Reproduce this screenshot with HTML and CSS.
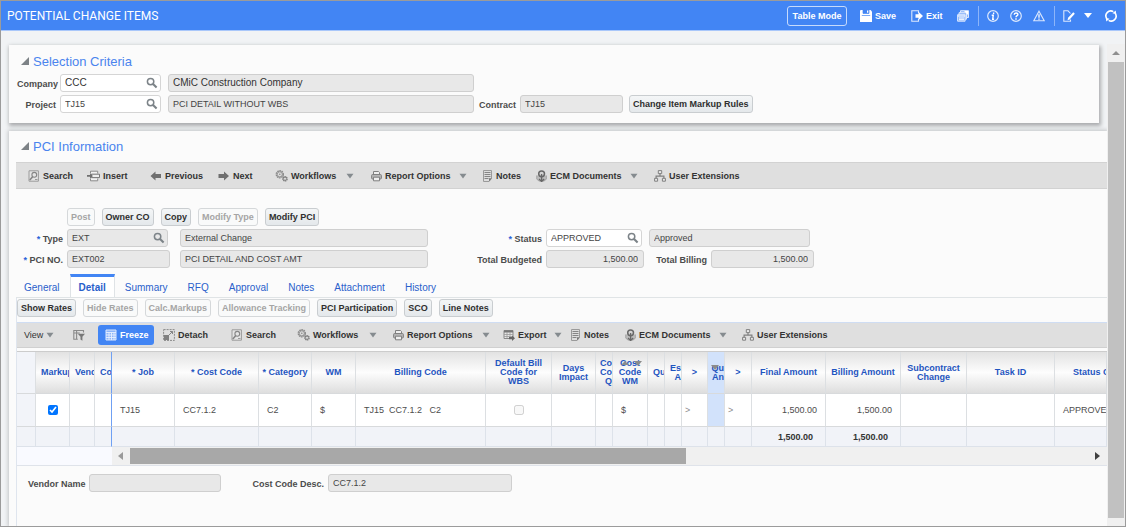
FILE: index.html
```html
<!DOCTYPE html>
<html lang="en">
<head>
<meta charset="utf-8">
<title>Potential Change Items</title>
<link rel="stylesheet" href="styles.css">
</head>
<body>
<svg class="sprite" aria-hidden="true">
  <symbol id="i-lens" viewBox="0 0 12 12"><circle cx="4.6" cy="4.6" r="3.2" fill="none" stroke="#7c8388" stroke-width="1.5"/><path d="M7 7l3.6 3.6" stroke="#7c8388" stroke-width="2.1"/></symbol>
  <symbol id="i-find" viewBox="0 0 12 12"><path d="M1 .8h9.4v10.400H1z" fill="#e4e4e4" stroke="#9a9a9a"/><circle cx="6.300" cy="4.800" r="2.400" fill="none" stroke="#858585" stroke-width="1.100"/><path d="M4.600 6.800L1.800 10" stroke="#858585" stroke-width="1.600"/><path d="M7 9.500h2.500" stroke="#999"/></symbol>
  <symbol id="i-insert" viewBox="0 0 13 12"><path d="M3.500 3.500V1.200h7.200v2.300M3.500 8.500v2.300h7.200V8.500" fill="#f2f2f2" stroke="#8b8b8b"/><path d="M4.500 4.200h8v3.400h-8z" fill="#eee" stroke="#777"/><path d="M0 5h3V3.400L6 5.900 3 8.400V6.800H0z" fill="#707070"/></symbol>
  <symbol id="i-left" viewBox="0 0 12 12"><path d="M.5 6L5.500 1.500V4H11v4H5.500v2.500z" fill="#6f6f6f"/></symbol>
  <symbol id="i-right" viewBox="0 0 12 12"><path d="M11 6L6 1.500V4H.5v4H6v2.500z" fill="#6f6f6f"/></symbol>
  <symbol id="i-gears" viewBox="0 0 13 12"><circle cx="4.800" cy="4.300" r="3.300" fill="none" stroke="#8a8a8a" stroke-width="1.800" stroke-dasharray="1.500 .6"/><circle cx="4.800" cy="4.300" r="2.500" fill="#ddd" stroke="#8a8a8a" stroke-width=".8"/><circle cx="4.800" cy="4.300" r=".8" fill="#888"/><circle cx="10" cy="8.800" r="2" fill="#ddd" stroke="#7c7c7c" stroke-width="1.600" stroke-dasharray="1.200 .4"/><circle cx="10" cy="8.800" r="1.500" fill="#ddd" stroke="#7c7c7c" stroke-width=".7"/></symbol>
  <symbol id="i-print" viewBox="0 0 11 12"><path d="M2.500 4.500V1.500h5l1 1v2" fill="#eee" stroke="#808080"/><rect x=".6" y="4.500" width="9.800" height="4.500" rx="1" fill="#b5b5b5" stroke="#808080"/><path d="M2.500 7.200h6v3.600h-6z" fill="#eee" stroke="#808080"/></symbol>
  <symbol id="i-note" viewBox="0 0 10 12"><path d="M.5.5h8v8l-2.500 3H.5z" fill="#ddd" stroke="#9a9a9a"/><path d="M1.500 2.500h6M1.500 4.500h6M1.500 6.500h6M1.500 8.500h4" stroke="#858585"/><path d="M6 11.500l2.800-3.200H6z" fill="#777"/></symbol>
  <symbol id="i-ecm" viewBox="0 0 11 12"><path d="M.8 5.500v3.500l2 2h5.500l2-2V5.500" fill="#bdbdbd" stroke="#a0a0a0"/><circle cx="5.600" cy="3.800" r="2.900" fill="#d4d4d4" stroke="#686868" stroke-width="1.500"/><path d="M5.600 4v7.500M3 9l2.600 2.500L8.200 9" fill="none" stroke="#686868" stroke-width="1.300"/></symbol>
  <symbol id="i-org" viewBox="0 0 12 12"><path d="M4.300.6h3.400v3H4.300zM.6 8.300h3v2.900h-3zM8.400 8.300h3v2.900h-3z" fill="#e8e8e8" stroke="#808080"/><path d="M6 3.600v2.600M2.100 8.300V6.200h7.800v2.100" fill="none" stroke="#808080" stroke-width="1.200"/></symbol>
  <symbol id="i-qbe" viewBox="0 0 12 12"><path d="M10.500 3.500V1.500H.8v8.700h4M.8 4h6M3.600 1.500v8.700" fill="none" stroke="#8a8a8a" stroke-width="1.100"/><path d="M4.800 4.800h7.200L9.400 7.700v4L7.500 10.500V7.700z" fill="#777"/></symbol>
  <symbol id="i-freeze" viewBox="0 0 12 12"><path d="M1 1h10v10H1z" fill="#8db5f9" stroke="#dbe8fe"/><path d="M1 3.500h10M4 3.500V11M6.500 3.500V11M9 3.500V11M1 6h10M1 8.500h10" stroke="#e9f1ff" stroke-width=".9"/></symbol>
  <symbol id="i-detach" viewBox="0 0 12 12"><path d="M.6.6h10.800v10.800H.6z" fill="none" stroke="#8a8a8a" stroke-dasharray="2 1"/><path d="M1 6h5v5H1z" fill="#808080"/><path d="M6 6l3.500-3.500M7 2.500h2.500V5" fill="none" stroke="#858585"/></symbol>
  <symbol id="i-export" viewBox="0 0 12 12"><path d="M1 1.500h9v8H1z" fill="#e8e8e8" stroke="#888"/><path d="M1 2.500h9" stroke="#777" stroke-width="2"/><path d="M1 5.500h9M1 7.500h9M4 3v6M7 3v6" stroke="#999" stroke-width=".8"/><path d="M6 8h3V6.500l3 2.700L9 12v-1.800H6z" fill="#666"/></symbol>
  <symbol id="i-caret" viewBox="0 0 8 6"><path d="M.5.8h7L4 5.600z" fill="#858b8f"/></symbol>
  <symbol id="i-save" viewBox="0 0 12 12"><path d="M.5 0h10L12 1.500V12H.5A.5.5 0 0 1 0 11.500V.5z" fill="#fff"/><path d="M3 0h6v3.400H3zM1.800 5.500h8.400" fill="#4285f4" stroke="#4285f4" stroke-width=".7"/><path d="M7 .4h1.300v2.400H7z" fill="#fff"/></symbol>
  <symbol id="i-exit" viewBox="0 0 12 12"><path d="M7.500 3V.8H.8v10.400h6.700V9" fill="none" stroke="#dce8fd" stroke-width="1.100"/><path d="M4.500 4.300h3V1.800L12 6 7.500 10.200V7.700h-3z" fill="#fff"/></symbol>
  <symbol id="i-windows" viewBox="0 0 12 12"><path d="M3.500.7h8v6.800h-8z" fill="#8db5f9" stroke="#dce8fd"/><path d="M2 2.700h7.500v6.500H2z" fill="#8db5f9" stroke="#dce8fd"/><path d="M.6 4.700h7.500v6.500H.6z" fill="#8db5f9" stroke="#dce8fd"/><path d="M1 6h7M2 8h5M2 9.700h5" stroke="#fff"/><path d="M7 1h4v4z" fill="#fff"/></symbol>
  <symbol id="i-info" viewBox="0 0 12 12"><circle cx="6" cy="6" r="5.300" fill="none" stroke="#dce8fd" stroke-width="1.200"/><path d="M6.600 2.400v1.500M4.700 5.200h1.600l-.6 4h1.400" fill="none" stroke="#fff" stroke-width="1.400"/></symbol>
  <symbol id="i-help" viewBox="0 0 12 12"><circle cx="6" cy="6" r="5.300" fill="none" stroke="#dce8fd" stroke-width="1.200"/><path d="M4.200 4.700C4.200 2.400 7.900 2.400 7.900 4.500 7.900 5.800 6 5.600 6 7.300M6 8.300v1.400" fill="none" stroke="#fff" stroke-width="1.400"/></symbol>
  <symbol id="i-warn" viewBox="0 0 12 12"><path d="M6 1.200l5.200 9.600H.8z" fill="none" stroke="#dce8fd" stroke-width="1.100"/><path d="M6 4.200v3.500M6 8.500v1.200" stroke="#fff" stroke-width="1.300"/></symbol>
  <symbol id="i-edit" viewBox="0 0 12 12"><path d="M7.500 3.500L5 .8H.8v10.400h6.700V9.500" fill="none" stroke="#dce8fd" stroke-width="1.100"/><path d="M4.500 10.300l.6-2.600L10.300 2.200l1.500 1.500L6.600 9.400z" fill="#fff"/></symbol>
  <symbol id="i-refresh" viewBox="0 0 12 12"><path d="M1.600 8.300A4.900 4.900 0 0 1 8.300 1.600M10.400 3.700A4.900 4.900 0 0 1 3.700 10.400" fill="none" stroke="#fff" stroke-width="1.600"/><path d="M7.500 3.200L10.700.6l.5 3.700zM4.500 8.800L1.300 11.400.8 7.700z" fill="#fff"/></symbol>
</svg>

<div class="app">
  <header class="topbar">
    <h1 class="topbar-title">POTENTIAL CHANGE ITEMS</h1>
    <div class="topbar-tools">
      <button class="mode-btn">Table Mode</button>
      <button class="tool"><svg class="ico"><use href="#i-save"/></svg>Save</button>
      <button class="tool"><svg class="ico"><use href="#i-exit"/></svg>Exit</button>
      <button class="tool" aria-label="Windows"><svg class="ico"><use href="#i-windows"/></svg></button>
      <span class="sep"></span>
      <button class="tool" aria-label="Information"><svg class="ico"><use href="#i-info"/></svg></button>
      <button class="tool" aria-label="Help"><svg class="ico"><use href="#i-help"/></svg></button>
      <button class="tool" aria-label="Warnings"><svg class="ico"><use href="#i-warn"/></svg></button>
      <span class="sep"></span>
      <button class="tool" aria-label="Edit"><svg class="ico"><use href="#i-edit"/></svg></button>
      <button class="tool" aria-label="Edit options"><span class="tri-down"></span></button>
      <button class="tool" aria-label="Refresh"><svg class="ico"><use href="#i-refresh"/></svg></button>
    </div>
  </header>

  <div class="body">
    <main class="content">
      <section class="panel panel-criteria">
        <h2 class="panel-title"><span class="disclose"></span>Selection Criteria</h2>
        <div class="row">
          <label class="lbl lbl-criteria" for="company">Company</label>
          <div class="lov w-lov"><input class="field arial" id="company" value="CCC"><button class="lens" aria-label="Find company"><svg class="ico"><use href="#i-lens"/></svg></button></div>
          <input class="field ro arial w-desc" aria-label="Company name" value="CMiC Construction Company" readonly>
        </div>
        <div class="row">
          <label class="lbl lbl-criteria" for="project">Project</label>
          <div class="lov w-lov"><input class="field" id="project" value="TJ15"><button class="lens" aria-label="Find project"><svg class="ico"><use href="#i-lens"/></svg></button></div>
          <input class="field ro w-desc" aria-label="Project name" value="PCI DETAIL WITHOUT WBS" readonly>
          <label class="lbl lbl-contract" for="contract">Contract</label>
          <input class="field ro w-code" id="contract" value="TJ15" readonly>
          <button class="btn btn-rules">Change Item Markup Rules</button>
        </div>
      </section>

      <section class="panel panel-info">
        <h2 class="panel-title"><span class="disclose"></span>PCI Information</h2>
        <div class="toolbar toolbar-main">
          <button class="tool"><svg class="ico"><use href="#i-find"/></svg>Search</button>
          <button class="tool"><svg class="ico ico-wide"><use href="#i-insert"/></svg>Insert</button>
          <button class="tool"><svg class="ico"><use href="#i-left"/></svg>Previous</button>
          <button class="tool"><svg class="ico"><use href="#i-right"/></svg>Next</button>
          <button class="tool"><svg class="ico ico-wide"><use href="#i-gears"/></svg>Workflows</button>
          <button class="tool" aria-label="Workflows menu"><svg class="caret"><use href="#i-caret"/></svg></button>
          <button class="tool"><svg class="ico ico-slim"><use href="#i-print"/></svg>Report Options</button>
          <button class="tool" aria-label="Report options menu"><svg class="caret"><use href="#i-caret"/></svg></button>
          <button class="tool"><svg class="ico ico-note"><use href="#i-note"/></svg>Notes</button>
          <button class="tool"><svg class="ico ico-slim"><use href="#i-ecm"/></svg>ECM Documents</button>
          <button class="tool" aria-label="ECM documents menu"><svg class="caret"><use href="#i-caret"/></svg></button>
          <button class="tool"><svg class="ico"><use href="#i-org"/></svg>User Extensions</button>
        </div>

        <div class="row actions">
          <button class="btn" disabled>Post</button>
          <button class="btn">Owner CO</button>
          <button class="btn">Copy</button>
          <button class="btn" disabled>Modify Type</button>
          <button class="btn">Modify PCI</button>
        </div>
        <div class="row">
          <label class="lbl lbl-info" for="type"><span class="req">*</span> Type</label>
          <div class="lov w-lov"><input class="field ro" id="type" value="EXT" readonly><button class="lens" aria-label="Find type"><svg class="ico"><use href="#i-lens"/></svg></button></div>
          <input class="field ro w-name after-lov" aria-label="Type name" value="External Change" readonly>
          <label class="lbl lbl-status" for="status"><span class="req">*</span> Status</label>
          <div class="lov w-status"><input class="field" id="status" value="APPROVED"><button class="lens" aria-label="Find status"><svg class="ico"><use href="#i-lens"/></svg></button></div>
          <input class="field ro w-approved" aria-label="Status name" value="Approved" readonly>
        </div>
        <div class="row">
          <label class="lbl lbl-info" for="pcino"><span class="req">*</span> PCI NO.</label>
          <input class="field ro w-code" id="pcino" value="EXT002" readonly>
          <input class="field ro w-name after-code" aria-label="PCI name" value="PCI DETAIL AND COST AMT" readonly>
          <label class="lbl lbl-status" for="budget">Total Budgeted</label>
          <input class="field ro num w-budget" id="budget" value="1,500.00" readonly>
          <label class="lbl lbl-billing" for="billing">Total Billing</label>
          <input class="field ro num w-code" id="billing" value="1,500.00" readonly>
        </div>

        <div class="tabs" role="tablist">
          <button class="tab" role="tab">General</button>
          <button class="tab tab-on" role="tab" aria-selected="true">Detail</button>
          <button class="tab" role="tab">Summary</button>
          <button class="tab" role="tab">RFQ</button>
          <button class="tab" role="tab">Approval</button>
          <button class="tab" role="tab">Notes</button>
          <button class="tab" role="tab">Attachment</button>
          <button class="tab" role="tab">History</button>
        </div>

        <div class="detail">
          <div class="row detail-actions">
            <button class="btn">Show Rates</button>
            <button class="btn" disabled>Hide Rates</button>
            <button class="btn" disabled>Calc.Markups</button>
            <button class="btn" disabled>Allowance Tracking</button>
            <button class="btn">PCI Participation</button>
            <button class="btn">SCO</button>
            <button class="btn">Line Notes</button>
          </div>

          <div class="toolbar toolbar-grid">
            <button class="tool tool-view">View<svg class="caret"><use href="#i-caret"/></svg></button>
            <button class="tool" aria-label="Query by example"><svg class="ico"><use href="#i-qbe"/></svg></button>
            <button class="tool tool-on"><svg class="ico"><use href="#i-freeze"/></svg>Freeze</button>
            <button class="tool"><svg class="ico"><use href="#i-detach"/></svg>Detach</button>
            <button class="tool"><svg class="ico"><use href="#i-find"/></svg>Search</button>
            <button class="tool"><svg class="ico ico-wide"><use href="#i-gears"/></svg>Workflows</button>
            <button class="tool" aria-label="Workflows menu"><svg class="caret"><use href="#i-caret"/></svg></button>
            <button class="tool"><svg class="ico ico-slim"><use href="#i-print"/></svg>Report Options</button>
            <button class="tool" aria-label="Report options menu"><svg class="caret"><use href="#i-caret"/></svg></button>
            <button class="tool"><svg class="ico"><use href="#i-export"/></svg>Export</button>
            <button class="tool" aria-label="Export menu"><svg class="caret"><use href="#i-caret"/></svg></button>
            <button class="tool"><svg class="ico ico-note"><use href="#i-note"/></svg>Notes</button>
            <button class="tool"><svg class="ico ico-slim"><use href="#i-ecm"/></svg>ECM Documents</button>
            <button class="tool" aria-label="ECM documents menu"><svg class="caret"><use href="#i-caret"/></svg></button>
            <button class="tool"><svg class="ico"><use href="#i-org"/></svg>User Extensions</button>
          </div>

          <table class="grid">
            <colgroup>
              <col class="c19"><col class="c34"><col class="c25"><col class="c17"><col class="c63"><col class="c84"><col class="c53"><col class="c44"><col class="c130"><col class="c66"><col class="c44"><col class="c17"><col class="c35"><col class="c17"><col class="c17"><col class="c26"><col class="c17"><col class="c27"><col class="c74"><col class="c75"><col class="c66"><col class="c88"><col>
            </colgroup>
            <thead>
              <tr>
                <th class="handle"></th>
                <th class="cut">Markup</th>
                <th class="cut">Vend</th>
                <th class="cut frozen">Co</th>
                <th>* Job</th>
                <th>* Cost Code</th>
                <th>* Category</th>
                <th>WM</th>
                <th>Billing Code</th>
                <th>Default Bill Code for WBS</th>
                <th>Days Impact</th>
                <th class="end">Co<br>Co<br>Q</th>
                <th class="sorted">Cost Code WM<span class="sort sort-up"></span><span class="sort sort-down"></span></th>
                <th class="cut">Qu</th>
                <th class="end">Es<br>A</th>
                <th>&gt;</th>
                <th class="end picked sorted">Qu<br>An<span class="sort sort-left"></span></th>
                <th>&gt;</th>
                <th>Final Amount</th>
                <th>Billing Amount</th>
                <th>Subcontract Change</th>
                <th>Task ID</th>
                <th class="status">Status C</th>
              </tr>
            </thead>
            <tbody>
              <tr>
                <td class="handle"></td>
                <td class="mid"><input class="check" type="checkbox" aria-label="Markup" checked></td>
                <td></td>
                <td class="frozen"></td>
                <td>TJ15</td>
                <td>CC7.1.2</td>
                <td>C2</td>
                <td>$</td>
                <td class="pre">TJ15  CC7.1.2   C2</td>
                <td class="mid"><input class="check" type="checkbox" aria-label="Default bill code for WBS" disabled></td>
                <td></td>
                <td></td>
                <td>$</td>
                <td></td>
                <td></td>
                <td class="more">&gt;</td>
                <td class="picked"></td>
                <td class="more">&gt;</td>
                <td class="num">1,500.00</td>
                <td class="num">1,500.00</td>
                <td></td>
                <td></td>
                <td>APPROVED</td>
              </tr>
            </tbody>
            <tfoot>
              <tr>
                <td></td><td></td><td></td><td class="frozen"></td><td></td><td></td><td></td><td></td><td></td><td></td><td></td><td></td><td></td><td></td><td></td><td></td><td></td><td></td>
                <td class="sum">1,500.00</td>
                <td class="sum">1,500.00</td>
                <td></td><td></td><td></td>
              </tr>
            </tfoot>
          </table>
          <div class="hscroll">
            <span class="hscroll-blank"></span>
            <span class="tri-left"></span>
            <span class="hscroll-track"><span class="hscroll-thumb"></span></span>
            <span class="tri-right"></span>
          </div>

          <div class="row row-foot">
            <label class="lbl lbl-vendor" for="vendor">Vendor Name</label>
            <input class="field ro w-vendor" id="vendor" readonly>
            <label class="lbl lbl-ccdesc" for="ccdesc">Cost Code Desc.</label>
            <input class="field ro w-ccdesc" id="ccdesc" value="CC7.1.2" readonly>
          </div>
        </div>
      </section>
    </main>
    <div class="vscroll">
      <span class="tri-up"></span>
      <span class="vscroll-thumb"></span>
    </div>
  </div>
</div>
</body>
</html>
```

FILE: styles.css
```css
* { box-sizing: border-box; }

body {
  margin: 0;
  font-family: "Liberation Sans", Arial, sans-serif;
  font-size: 9px;
  color: #333;
}

button, input { font: inherit; color: inherit; margin: 0; }
button { padding: 0; border: 0; background: none; white-space: nowrap; }

.sprite { display: none; }

.app {
  display: flex;
  flex-direction: column;
  min-height: 100vh;
  border: 1px solid #9b9b9b;
  background: #f1f3f5;
  overflow: hidden;
}

/* Top bar */
.topbar {
  display: flex;
  align-items: center;
  justify-content: space-between;
  height: 30px;
  padding: 0 8px 0 6px;
  background: #4285f4;
  border-bottom: 1px solid #a9c7fa;
  color: #fff;
}
.topbar-title { margin: 0; font: 400 12px Roboto, sans-serif; }
.topbar-tools {
  display: grid;
  grid-template-columns: 73px 51px 46px 21px 9px 23px 23px 21px 9px 21px 21px 12px;
  align-items: center;
}
.mode-btn {
  width: 60px;
  height: 20px;
  border: 1px solid #c6dafc;
  border-radius: 3px;
  font-weight: 700;
}
.sep { width: 1px; height: 20px; background: #8db5f9; }
.tri-down { border: 4px solid transparent; border-top: 5px solid #fff; border-bottom: 0; }

.tool {
  display: flex;
  align-items: center;
  gap: 3px;
  height: 20px;
  font-weight: 700;
}
.ico { flex: none; width: 12px; height: 12px; }
.ico-wide { width: 13px; }
.ico-slim { width: 11px; }
.ico-note { width: 10px; }
.caret { flex: none; width: 8px; height: 6px; }

/* Page body */
.body { display: flex; flex: 1; }
.content {
  display: flex;
  flex: 1;
  flex-direction: column;
  min-width: 0;
  padding: 14px 0 0 8px;
}

.panel { background: #fbfbfb; box-shadow: 0 0 4px 1px #c2c4c6; }
.panel-criteria {
  margin: 0 8px 8px 0;
  padding: 7px 8px;
  box-shadow: 1px 2px 4px 1px #a9abad;
}
.panel-info {
  display: flex;
  flex: 1;
  flex-direction: column;
  padding: 6px 0 0 7px;
}
.panel-title {
  display: flex;
  align-items: center;
  gap: 4px;
  height: 18px;
  margin: 0 0 4px 4px;
  font-size: 13px;
  font-weight: 400;
  color: #4a84ee;
}
.disclose {
  width: 0;
  height: 0;
  border-left: 8px solid transparent;
  border-bottom: 8px solid #7d8286;
}
.panel-info .panel-title { margin: 0 0 7px 5px; }

/* Form rows */
.row { display: flex; align-items: center; margin-bottom: 3px; }
.lbl { padding-top: 2px; font-weight: 700; color: #4c4c4c; text-align: right; white-space: nowrap; }
.lbl-criteria { width: 39px; margin-right: 4px; }
.lbl-contract { width: 42px; margin-right: 4px; }
.lbl-info { width: 47px; margin-right: 4px; }
.lbl-status { width: 114px; margin-right: 4px; }
.lbl-billing { width: 63px; margin-right: 4px; }
.lbl-vendor { width: 57px; margin-right: 4px; }
.lbl-ccdesc { width: 103px; margin-right: 4px; }
.req { color: #2a62d8; }

.field {
  width: 100%;
  height: 18px;
  padding: 0 5px 1px 4px;
  border: 1px solid #d5d5d5;
  border-radius: 3px;
  background: #fff;
  color: #444;
  outline: 0;
}
.field.ro { background: #e8e8e8; border-color: #cfcfcf; }
.field.arial { font-size: 10px; color: #333; }
.num { text-align: right; }
.lov { position: relative; display: flex; flex: none; }
.lens { position: absolute; top: 3px; right: 3px; width: 12px; height: 12px; }
.lens .ico { display: block; }

.w-lov { width: 101px; }
.lov + .w-desc { width: 306px; margin-left: 7px; }
.field.w-code { width: 103px; flex: none; }
.field.w-name { width: 248px; }
.field.after-lov { margin-left: 12px; }
.field.after-code { margin-left: 10px; }
.w-status { width: 96px; }
.field.w-approved { width: 161px; margin-left: 7px; }
.field.w-budget { width: 98px; }
.field.w-vendor { width: 132px; }
.field.w-ccdesc { width: 184px; }

.btn {
  height: 18px;
  padding: 0 3px;
  border: 1px solid #c9cdd0;
  border-radius: 3px;
  background: linear-gradient(#f4f6f7, #e4e8eb);
  font-weight: 700;
  color: #2f2f2f;
}
.btn:disabled { background: #f9fafa; color: #a5a5a5; border-color: #d5d8da; }
.btn-rules { margin-left: 6px; }
.actions { gap: 7px; margin-left: 51px; }

/* Toolbars */
.toolbar { display: grid; align-items: center; background: #dfdfdf; }
.toolbar-main {
  grid-template-columns: 59px 63px 68px 57px 71px 25px 88px 24px 53px 94px 24px 1fr;
  height: 27px;
  margin-bottom: 19px;
  padding-left: 12px;
  border-top: 1px solid #d2d2d2;
  border-bottom: 1px solid #d2d2d2;
}
.toolbar-grid {
  grid-template-columns: 49px 25px 65px 68px 66px 72px 24px 89px 21px 51px 17px 54px 94px 23px 1fr;
  height: 26px;
  margin-bottom: 3px;
  padding-left: 7px;
  border-top: 1px solid #cfddf3;
  border-bottom: 1px solid #d0d0d0;
}
.tool-view { font-weight: 400; }
.tool-on {
  width: 56px;
  padding-left: 7px;
  border-radius: 3px;
  background: #4285f4;
  color: #fff;
}

/* Tabs */
.tabs { display: flex; margin-top: 3px; border-bottom: 1px solid #e0e4e6; }
.tab {
  height: 23px;
  padding: 0 10px;
  border-top: 3px solid transparent;
  font-size: 10px;
  color: #2a5fcb;
}
.tab:first-child { padding-left: 8px; }
.tab.tab-on {
  margin-bottom: -1px;
  padding: 0 8px;
  border: 1px solid #dfe3e6;
  border-top: 3px solid #4285f4;
  border-bottom: 0;
  background: #fff;
  font-weight: 700;
}

.detail { flex: 1; border-left: 1px solid #dfe5ee; }
.detail-actions { gap: 7px; margin: 1px 0 5px; }

/* Line grid */
.grid {
  width: 100%;
  table-layout: fixed;
  border-collapse: separate;
  border-spacing: 0;
  border-top: 1px solid #ccc;
}
.c17 { width: 17px; }
.c19 { width: 19px; }
.c25 { width: 25px; }
.c26 { width: 26px; }
.c27 { width: 27px; }
.c34 { width: 34px; }
.c35 { width: 35px; }
.c44 { width: 44px; }
.c53 { width: 53px; }
.c63 { width: 63px; }
.c66 { width: 66px; }
.c74 { width: 74px; }
.c75 { width: 75px; }
.c84 { width: 84px; }
.c88 { width: 88px; }
.c130 { width: 130px; }

.grid th, .grid td {
  overflow: hidden;
  border-right: 1px solid #dcdfe2;
  border-bottom: 1px solid #d8dadc;
}
.grid th {
  height: 42px;
  padding: 0 3px;
  background: linear-gradient(#e2e2e2, #fdfdfd 50%, #dedede);
  color: #1f55c0;
  line-height: 9px;
}
.grid th.cut { padding: 0 0 0 5px; text-align: left; white-space: nowrap; }
.grid th.end { padding: 0; text-align: right; }
.grid th.status { padding: 0 0 0 18px; text-align: left; white-space: nowrap; }
.grid td {
  height: 33px;
  padding: 0 8px;
  background: #fff;
  color: #4d4d4d;
  white-space: nowrap;
}
.grid td.pre { white-space: pre; }
.grid td.mid { padding: 0; text-align: center; }
.grid td.more { padding: 0 3px; color: #8a8a8a; }
.grid th.handle, .grid td.handle { background: #f2f4f9; }
.grid th.picked, .grid td.picked { background: #d2e2fb; }
.grid .frozen { border-right-color: #6fa0f3; }
.grid tfoot td { height: 20px; background: #f1f3f8; border-color: #dde2ea; }
.grid tfoot td.frozen { border-right-color: #6fa0f3; }
.grid tfoot td.sum { padding-right: 12px; font-weight: 700; color: #333; text-align: right; }
.check { width: 10px; height: 10px; vertical-align: middle; }

.sorted { position: relative; }
.sort { position: absolute; border: 4px solid transparent; }
.sort-up { top: 9px; left: 8px; border-top: 0; border-bottom: 4px solid #8b8b8b; }
.sort-down { top: 9px; right: 5px; border-top: 5px solid #8b8b8b; border-bottom: 0; }
.sort-left { top: 13px; left: 3px; border-top: 5px solid #8b8b8b; border-bottom: 0; }

.hscroll {
  display: flex;
  align-items: center;
  height: 19px;
  border-bottom: 1px solid #dfe3ea;
  background: #f0f0f0;
}
.hscroll-blank { width: 95px; height: 18px; background: #f9faff; }
.tri-left { margin: 0 7px 0 6px; border: 4px solid transparent; border-right: 5px solid #9a9a9a; border-left: 0; }
.tri-right { margin: 0 7px 0 6px; border: 4px solid transparent; border-left: 5px solid #404040; border-right: 0; }
.hscroll-track { flex: 1; height: 16px; }
.hscroll-thumb { display: block; width: 58%; height: 16px; background: #a8a8a8; }

.row-foot { margin: 8px 0 0 11px; }

/* Page scrollbar */
.vscroll {
  display: flex;
  flex-direction: column;
  align-items: center;
  width: 18px;
  margin-top: 13px;
  padding-bottom: 8px;
  background: #f0f0f0;
}
.tri-up { margin: 7px 0; border: 4px solid transparent; border-bottom: 4px solid #8f8f8f; border-top: 0; }
.vscroll-thumb { flex: 1; width: 16px; background: #c1c1c1; }
```
